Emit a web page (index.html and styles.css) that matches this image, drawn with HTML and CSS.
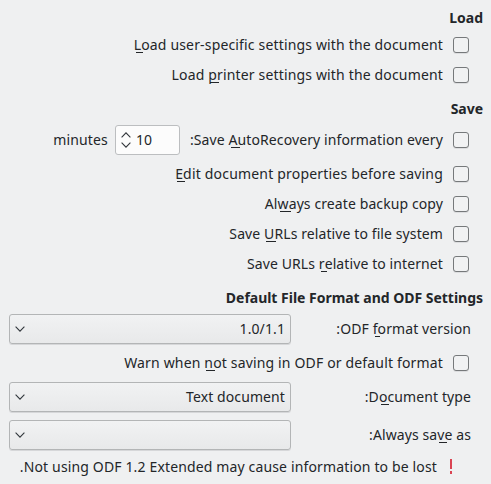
FILE: index.html
```html
<!DOCTYPE html>
<html lang="en" dir="rtl">
<head>
<meta charset="utf-8">
<title>Load/Save - General</title>
<link rel="stylesheet" href="styles.css">
</head>
<body>
<main class="page">
  <section class="group">
    <h2 class="title">Load</h2>
    <label class="row"><span class="box"></span><span class="text"><u class="key">L</u>oad user-specific settings with the document</span></label>
    <label class="row"><span class="box"></span><span class="text">Load <u class="key">p</u>rinter settings with the document</span></label>
  </section>
  <section class="group">
    <h2 class="title">Save</h2>
    <div class="row row-spin">
      <span class="box"></span><span class="text tight">Save <u class="key">A</u>utoRecovery information every:</span>
      <span class="spin"><span class="value">10</span><svg class="arrows" width="10" height="16" viewBox="0 0 10 16"><path d="M.6 5.3 5 .9l4.400 4.400M.6 10.700 5 15.100l4.400-4.400"/></svg></span>
      <span class="text unit">minutes</span>
    </div>
    <label class="row"><span class="box"></span><span class="text loose"><u class="key">E</u>dit document properties before saving</span></label>
    <label class="row"><span class="box"></span><span class="text tight">Al<u class="key">w</u>ays create backup copy</span></label>
    <label class="row"><span class="box"></span><span class="text tight">Save <u class="key">U</u>RLs relative to file system</span></label>
    <label class="row"><span class="box"></span><span class="text tight">Save URLs <u class="key">r</u>elative to internet</span></label>
  </section>
  <section class="group">
    <h2 class="title">Default File Format and ODF Settings</h2>
    <div class="row field">
      <span class="text tight">ODF <u class="key">f</u>ormat version:</span>
      <span class="combo"><span class="value">1.0/1.1</span><svg class="chevron" width="10" height="6" viewBox="0 0 10 6"><path d="M.6.700 5 5.100 9.400.700"/></svg></span>
    </div>
    <label class="row warn"><span class="box"></span><span class="text">Warn when <u class="key">n</u>ot saving in ODF or default format</span></label>
    <div class="row field">
      <span class="text tight">D<u class="key">o</u>cument type:</span>
      <span class="combo"><span class="value">Text document</span><svg class="chevron" width="10" height="6" viewBox="0 0 10 6"><path d="M.6.700 5 5.100 9.400.700"/></svg></span>
    </div>
    <div class="row field last">
      <span class="text tight">Always sa<u class="key">v</u>e as:</span>
      <span class="combo"><span class="value"></span><svg class="chevron" width="10" height="6" viewBox="0 0 10 6"><path d="M.6.700 5 5.100 9.400.700"/></svg></span>
    </div>
    <div class="row note">
      <svg class="alert" width="2" height="15" viewBox="0 0 2 15"><path d="M0 0h2v10H0zM0 12h2v3H0z"/></svg>
      <span class="text">Not using ODF 1.2 Extended may cause information to be lost.</span>
    </div>
  </section>
</main>
</body>
</html>
```
FILE: styles.css
```css
* { box-sizing: border-box; }
body {
  margin: 0;
  background: #eff0f1;
  color: #232629;
  font: 14px/18px "Noto Sans", sans-serif;
  letter-spacing: .16px;
}
.page {
  height: 484px;
  padding: 6px 8px 0 9px;
  display: flex;
  flex-direction: column;
  gap: 7px;
  overflow: hidden;
}
.title {
  margin: 0;
  height: 24px;
  font-size: 14px;
  font-weight: 700;
  line-height: 24px;
  letter-spacing: -.02px;
}
.row {
  height: 30px;
  padding-right: 14px;
  display: flex;
  align-items: center;
  white-space: nowrap;
}
.tight, .value { letter-spacing: .1px; }
.loose { letter-spacing: .19px; }
.box {
  width: 16px;
  height: 16px;
  margin-left: 10px;
  flex: none;
  border: 1px solid #76797b;
  border-radius: 3px;
  background: #f1f2f3;
  box-shadow: 0 1px 0 #dcdddf;
}
.key {
  position: relative;
  text-decoration: none;
}
.key::after {
  content: "";
  position: absolute;
  left: 2px;
  right: -2px;
  bottom: 1px;
  height: 1px;
  background: #232629;
}
.row-spin { margin: 4px 0; }
.spin {
  width: 65px;
  height: 30px;
  margin-right: 10px;
  padding: 0 22px 0 5px;
  display: flex;
  align-items: center;
  justify-content: flex-end;
  gap: 5px;
  border: 1px solid #bcbec0;
  border-radius: 3px;
  background: #fcfcfc;
}
.unit { margin-right: 7px; }
.arrows, .chevron {
  fill: none;
  stroke: #31363b;
  stroke-width: 1.1;
}
.field {
  padding-right: 12px;
  margin-top: 4px;
  justify-content: space-between;
}
.combo {
  width: 282px;
  height: 30px;
  padding: 0 5px;
  display: flex;
  align-items: center;
  justify-content: space-between;
  border: 1px solid #b3b5b6;
  border-radius: 3px;
  background: linear-gradient(#f1f2f3, #e8e9ea);
  box-shadow: 0 1px 0 #d6d7d9;
}
.warn { margin-top: 4px; }
.last { margin-top: 8px; }
.note {
  padding-right: 31px;
  margin-top: 2px;
  letter-spacing: .145px;
}
.alert {
  margin: 0 0 1px 13px;
  fill: #da4453;
}
```
